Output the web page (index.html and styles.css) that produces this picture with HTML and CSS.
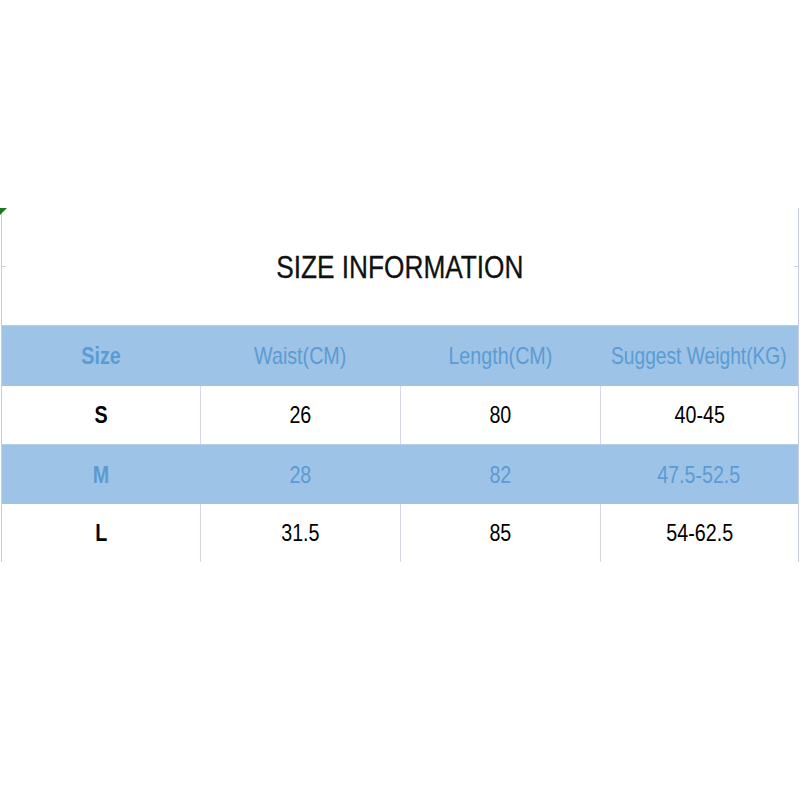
FILE: index.html
```html
<!DOCTYPE html>
<html>
<head>
<meta charset="utf-8">
<link rel="stylesheet" href="styles.css">
</head>
<body>
<div class="page">
  <div class="sheet">
    <div class="title-row">
      <span class="corner"></span>
      <span class="tick tick-left"></span>
      <span class="tick tick-right"></span>
      <h1 class="title"><span class="narrow">SIZE INFORMATION</span></h1>
    </div>
    <div class="row row-blue row-head">
      <div class="cell bold"><span class="narrow">Size</span></div>
      <div class="cell"><span class="narrow">Waist(CM)</span></div>
      <div class="cell"><span class="narrow">Length(CM)</span></div>
      <div class="cell"><span class="narrow narrower">Suggest Weight(KG)</span></div>
    </div>
    <div class="row row-white">
      <div class="cell bold"><span class="narrow">S</span></div>
      <div class="cell"><span class="narrow">26</span></div>
      <div class="cell"><span class="narrow">80</span></div>
      <div class="cell"><span class="narrow">40-45</span></div>
    </div>
    <div class="row row-blue">
      <div class="cell bold"><span class="narrow">M</span></div>
      <div class="cell"><span class="narrow">28</span></div>
      <div class="cell"><span class="narrow">82</span></div>
      <div class="cell"><span class="narrow">47.5-52.5</span></div>
    </div>
    <div class="row row-white">
      <div class="cell bold"><span class="narrow">L</span></div>
      <div class="cell"><span class="narrow">31.5</span></div>
      <div class="cell"><span class="narrow">85</span></div>
      <div class="cell"><span class="narrow">54-62.5</span></div>
    </div>
  </div>
</div>
</body>
</html>
```

FILE: styles.css
```css
html, body {
  margin: 0;
  padding: 0;
  background: #ffffff;
}
body {
  width: 800px;
  height: 800px;
  font-family: "Liberation Sans", Arial, sans-serif;
}
.page {
  padding-top: 208px;
}
.sheet {
  width: 798px;
  margin-left: 1px;
  border-left: 1px solid #c9cde4;
  border-right: 1px solid #c9cde4;
  box-sizing: border-box;
}
.title-row {
  position: relative;
  height: 117px;
  display: flex;
  align-items: center;
  justify-content: center;
}
.corner {
  position: absolute;
  left: -2px;
  top: 0;
  width: 0;
  height: 0;
  border-top: 7px solid #1a7a1a;
  border-right: 7px solid transparent;
}
.tick {
  position: absolute;
  top: 58px;
  width: 4px;
  height: 1px;
  background: #d0d3e6;
}
.tick-left { left: 0; }
.tick-right { right: 0; }
.title {
  margin: 0;
  font-weight: normal;
  font-size: 32px;
  color: #111111;
  line-height: 1;
  -webkit-text-stroke: 0.3px #111111;
}
.narrow {
  display: inline-block;
  transform: scaleX(0.82);
  white-space: nowrap;
}
.narrower {
  transform: scaleX(0.8);
}
.row {
  display: grid;
  grid-template-columns: 198px 200px 200px minmax(0, 1fr);
  font-size: 24px;
}
.row-blue {
  height: 59px;
  background: #9dc3e6;
  color: #5b9bd5;
  border-top: 1px solid #b4d0ec;
}
.row-head {
  height: 60px;
}
.row-white {
  height: 58px;
  background: #ffffff;
  color: #000000;
}
.cell {
  min-width: 0;
  display: flex;
  align-items: center;
  justify-content: center;
}
.row-white .cell + .cell {
  border-left: 1px solid #d5d8e8;
}
.bold {
  font-weight: bold;
}
```
